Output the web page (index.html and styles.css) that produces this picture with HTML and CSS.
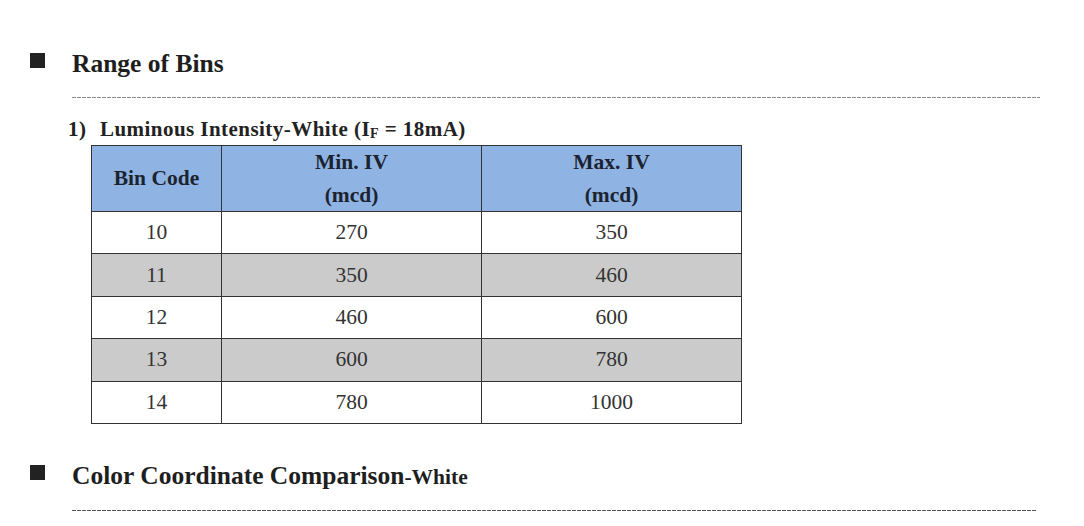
FILE: index.html
```html
<!DOCTYPE html>
<html>
<head>
<meta charset="utf-8">
<link rel="stylesheet" href="styles.css">
</head>
<body>
<div class="page">
  <div class="title-row first">
    <span class="square"></span>
    <h2 class="title">Range of Bins</h2>
  </div>
  <div class="dash"></div>

  <div class="subtitle"><span class="num">1)</span><span>Luminous Intensity-White (I<sub>F</sub> = 18mA)</span></div>

  <table class="bins">
    <colgroup>
      <col class="c1"><col class="c2"><col class="c3">
    </colgroup>
    <thead>
      <tr>
        <th>Bin Code</th>
        <th><span class="hl">Min. IV</span><span class="hl">(mcd)</span></th>
        <th><span class="hl">Max. IV</span><span class="hl">(mcd)</span></th>
      </tr>
    </thead>
    <tbody>
      <tr><td>10</td><td>270</td><td>350</td></tr>
      <tr class="gray"><td>11</td><td>350</td><td>460</td></tr>
      <tr><td>12</td><td>460</td><td>600</td></tr>
      <tr class="gray"><td>13</td><td>600</td><td>780</td></tr>
      <tr><td>14</td><td>780</td><td>1000</td></tr>
    </tbody>
  </table>

  <div class="title-row second">
    <span class="square"></span>
    <h2 class="title">Color Coordinate Comparison<span class="small">-White</span></h2>
  </div>
  <div class="dash dash2"></div>
</div>
</body>
</html>
```

FILE: styles.css
```css
html, body {
  margin: 0;
  padding: 0;
  background: #ffffff;
}

body {
  font-family: "Liberation Serif", "Times New Roman", serif;
  color: #222;
  width: 1084px;
  height: 526px;
  overflow: hidden;
}

.page {
  padding-top: 49px;
}

.title-row {
  display: flex;
  align-items: flex-start;
  height: 30px;
}

.title-row.second {
  margin-top: 37px;
}

.square {
  display: block;
  width: 15px;
  height: 15px;
  background: #222;
  margin-left: 30px;
  margin-top: 4px;
}

.title {
  margin: 0 0 0 27px;
  font-size: 25.5px;
  line-height: 30px;
  font-weight: bold;
  color: #1e1e1e;
}

.title .small {
  font-size: 21.5px;
}

.dash {
  margin-left: 72px;
  margin-top: 18px;
  width: 968px;
  height: 1px;
  background: repeating-linear-gradient(to right, #8a8a8a 0, #8a8a8a 4px, transparent 4px, transparent 5px);
}

.dash2 {
  margin-top: 19px;
  width: 965px;
  background: repeating-linear-gradient(to right, #555 0, #555 4px, transparent 4px, transparent 5px);
}

.subtitle {
  margin-top: 19px;
  margin-left: 68px;
  font-size: 21px;
  letter-spacing: 0.45px;
  line-height: 24px;
  font-weight: bold;
  color: #222;
  display: flex;
}

.subtitle .num {
  width: 32px;
}

.subtitle sub {
  font-size: 14px;
  vertical-align: -2px;
  line-height: 0;
}

.bins {
  margin-top: 4px;
  margin-left: 91px;
  border-collapse: collapse;
  width: 651px;
  table-layout: fixed;
  font-size: 21.5px;
}

.bins col.c1 { width: 130px; }
.bins col.c2 { width: 260px; }
.bins col.c3 { width: 260px; }

.bins th,
.bins td {
  border: 1px solid #333;
  text-align: center;
  padding: 0;
}

.bins th {
  background: #8fb4e3;
  font-weight: bold;
  color: #1c2330;
  height: 62px;
  vertical-align: middle;
}

.bins th .hl {
  display: block;
  line-height: 32.5px;
}

.bins td {
  height: 41.4px;
  color: #333;
  font-weight: normal;
}

.bins tr.gray td {
  background: #cbcbcb;
}
```
